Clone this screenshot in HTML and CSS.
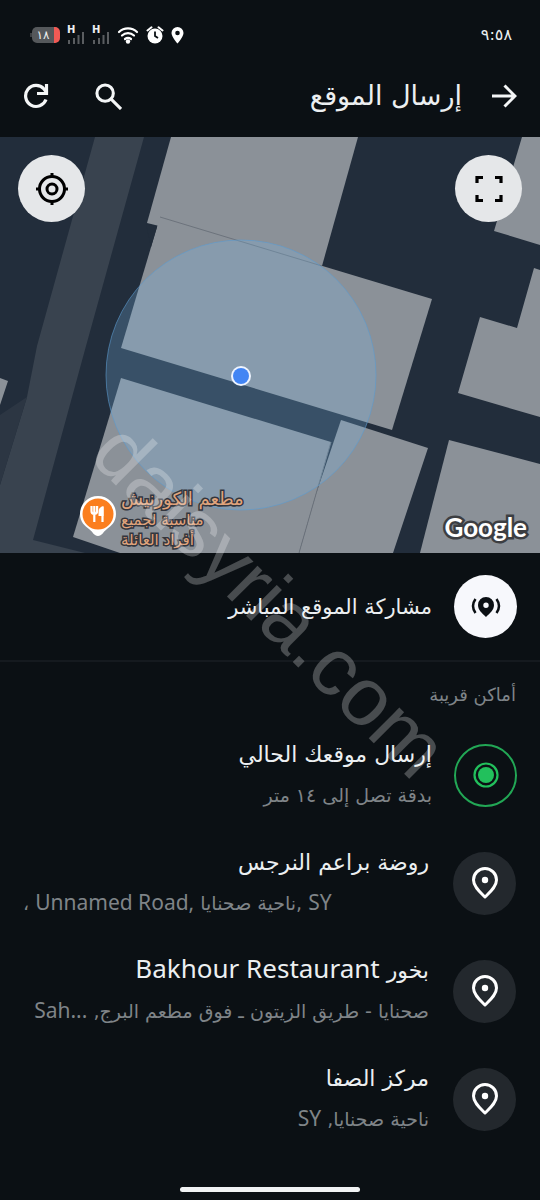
FILE: index.html
```html
<!DOCTYPE html>
<html lang="ar" dir="rtl">
  <head>
    <meta charset="UTF-8" />
    <meta name="viewport" content="width=device-width, initial-scale=1.0" />
    <title>إرسال الموقع</title>
    <link rel="stylesheet" href="styles.css">
  </head>
  <body>
    <div class="screen">
      <div class="status-bar">
        <span class="clock">٩:٥٨</span>
        <div class="status-icons">
          <svg width="13" height="18" viewBox="0 0 13 18">
            <path fill="#fff" fill-rule="evenodd" d="M6.500 1A6 6 0 0 0 .500 7c0 4 6 10.500 6 10.500s6-6.500 6-10.500a6 6 0 0 0-6-6zm0 3.700a2.300 2.300 0 1 1 0 4.600 2.300 2.300 0 0 1 0-4.600z" />
          </svg>
          <svg width="18" height="18" viewBox="0 0 18 18">
            <circle cx="9" cy="10" r="7.500" fill="#fff" />
            <path d="M1.500 4.500l4-3.200M16.500 4.500l-4-3.200" stroke="#fff" stroke-width="2" stroke-linecap="round" />
            <path d="M9 5.500V10l3 2" fill="none" stroke="#0b1014" stroke-width="1.800" />
          </svg>
          <svg width="22" height="18" viewBox="0 0 22 18">
            <g fill="none" stroke="#fff" stroke-width="2.200" stroke-linecap="round">
              <path d="M2 6a13 13 0 0 1 18 0" />
              <path d="M5 9.500a9 9 0 0 1 12 0" />
              <path d="M8 13a5 5 0 0 1 6 0" />
            </g>
            <circle cx="11" cy="15.500" r="2.200" fill="#fff" />
          </svg>
          <div class="signal">
            <span>H</span>
            <svg width="18" height="12" viewBox="0 0 18 12">
              <path d="M2 8v4M7 6v6M11.500 3v9M16 0v12" stroke="#5a5d60" stroke-width="2" />
            </svg>
          </div>
          <div class="signal">
            <span>H</span>
            <svg width="18" height="12" viewBox="0 0 18 12">
              <path d="M2 8v4M7 6v6M11.500 3v9M16 0v12" stroke="#5a5d60" stroke-width="2" />
            </svg>
          </div>
          <div class="battery">١٨</div>
        </div>
      </div>

      <header class="top-bar">
        <button class="icon-btn" aria-label="رجوع">
          <svg width="26" height="26" viewBox="0 0 26 26" fill="none" stroke="#f4f6f7" stroke-width="3">
            <path d="M1 13h23M13.500 2.500L24 13 13.500 23.500" />
          </svg>
        </button>
        <h1>إرسال الموقع</h1>
        <button class="icon-btn" aria-label="بحث">
          <svg width="27" height="27" viewBox="0 0 28 28" fill="none" stroke="#f4f6f7" stroke-width="3.200">
            <circle cx="10.500" cy="10.500" r="8.500" />
            <path d="M16.500 16.500L27 27" />
          </svg>
        </button>
        <button class="icon-btn" aria-label="تحديث">
          <svg width="26" height="26" viewBox="0 0 26 26" fill="none" stroke="#f4f6f7" stroke-width="3.200">
            <path d="M23 16.500A10.500 10.500 0 1 1 21 6l3 4" />
            <path d="M23.500 1v9.500H14" />
          </svg>
        </button>
      </header>

      <section class="map">
        <svg class="map-canvas" viewBox="0 137 540 416" preserveAspectRatio="xMidYMid slice">
          <rect y="137" width="540" height="416" fill="#222d3b" />
          <path fill="#39434f" d="M95 137h49L86 346 33 540l52 13H0v-68l27-88 10-51z" />
          <path fill="#2c3643" d="M27 397L0 485v-70z" />
          <g fill="#8b9198">
            <path d="M171 137h187l-36 129-175-43z" />
            <path d="M160 217l272 82-40 131-271-82z" />
            <path d="M121 378l210 64-32 111H120l-47-16z" />
            <path d="M341 420l87 28-35 105h-94l17-59z" />
            <path d="M522 137h18v108l-46-14z" />
            <path d="M534 268l6 2v147l-82-24 22-76 37 11z" />
            <path d="M449 440l91 24v89H420z" />
            <path d="M0 378l8 3-8 24z" />
          </g>
          <path d="M160 217l162 49" fill="none" stroke="#6c737c" />
          <path d="M146 224l11 3-6 20z" fill="#222d3b" />
          <path d="M331 442l-32 111" stroke="#6c737c" />
          <circle cx="241" cy="375" r="135" fill="#7cbcec" fill-opacity=".25" stroke="#5b9bd0" stroke-opacity=".6" />
          <circle cx="241" cy="376" r="10" fill="#eef4ff" />
          <circle cx="241" cy="376" r="8" fill="#4285f4" />
          <path fill="#fff" d="M98 496a18 18 0 0 0-18 18c0 8 5 12 9 15 4 3 5 7 9 7s5-4 9-7c4-3 9-7 9-15a18 18 0 0 0-18-18z" />
          <circle cx="98" cy="514" r="15.500" fill="#fb7e1e" />
          <path d="M91.500 506v5q0 3 2.800 3t2.800-3v-5M94.300 506v16M102.500 522v-15" fill="none" stroke="#fff" stroke-width="2.200" />
          <path fill="#fff" d="M103.500 506q-5 1-5 6v4h5z" />
        </svg>
        <button class="map-btn expand" aria-label="ملء الشاشة">
          <svg width="28" height="28" viewBox="0 0 28 28" fill="none" stroke="#000" stroke-width="3.200">
            <path d="M2 8V2.500h6M20 2.500h6V8M26 20v5.500h-6M8 25.500H2V20" />
          </svg>
        </button>
        <button class="map-btn locate" aria-label="موقعي">
          <svg width="34" height="34" viewBox="0 0 34 34" fill="none" stroke="#000" stroke-width="3">
            <circle cx="17" cy="17" r="12.500" />
            <circle cx="17" cy="17" r="5" />
            <path d="M17 1v4M17 29v4M1 17h4M29 17h4" />
          </svg>
        </button>
        <p class="poi"><span>مطعم الكورنيش</span><br>مناسبة لجميع<br>أفراد العائلة</p>
        <span class="google">Google</span>
      </section>

      <button class="row live">
        <span class="badge white">
          <svg width="30" height="24" viewBox="0 0 30 24">
            <path fill="#0b1014" fill-rule="evenodd" d="M15 2a8 8 0 0 0-8 8c0 5 4 8 8 12 4-4 8-7 8-12a8 8 0 0 0-8-8zm0 5.500a2.700 2.700 0 1 1 0 5.400 2.700 2.700 0 0 1 0-5.400z" />
            <path d="M4.500 4q-5 7 0 14M25.500 4q5 7 0 14" fill="none" stroke="#0b1014" stroke-width="2.500" />
          </svg>
        </span>
        <span class="text"><span class="name">مشاركة الموقع المباشر</span></span>
      </button>

      <h2>أماكن قريبة</h2>

      <button class="row">
        <span class="badge green">
          <svg width="26" height="26" viewBox="0 0 26 26">
            <circle cx="13" cy="13" r="11.500" fill="none" stroke="#22c05c" stroke-width="2.200" />
            <circle cx="13" cy="13" r="8" fill="#22c05c" />
          </svg>
        </span>
        <span class="text">
          <span class="name">إرسال موقعك الحالي</span>
          <span class="detail">بدقة تصل إلى ١٤ متر</span>
        </span>
      </button>
      <button class="row place">
        <span class="badge">
          <svg width="28" height="34" viewBox="0 0 28 34">
            <path fill="none" stroke="#fff" stroke-width="3" stroke-linejoin="round" d="M14 2.500A11.500 11.500 0 0 0 2.500 14c0 7 7 12.500 11.500 17 4.500-4.500 11.500-10 11.500-17A11.500 11.500 0 0 0 14 2.500z" />
            <circle cx="14" cy="14" r="3.200" fill="#fff" />
          </svg>
        </span>
        <span class="text">
          <span class="name">روضة براعم النرجس</span>
          <span class="detail" dir="ltr">، <span class="latin">Unnamed Road,</span> ناحية صحنايا, <span class="latin">SY</span></span>
        </span>
      </button>
      <button class="row place">
        <span class="badge">
          <svg width="28" height="34" viewBox="0 0 28 34">
            <path fill="none" stroke="#fff" stroke-width="3" stroke-linejoin="round" d="M14 2.500A11.500 11.500 0 0 0 2.500 14c0 7 7 12.500 11.500 17 4.500-4.500 11.500-10 11.500-17A11.500 11.500 0 0 0 14 2.500z" />
            <circle cx="14" cy="14" r="3.200" fill="#fff" />
          </svg>
        </span>
        <span class="text">
          <span class="name">بخور <span class="latin">Bakhour Restaurant</span></span>
          <span class="detail">صحنايا - طريق الزيتون ـ فوق مطعم البرج, <bdi class="latin" dir="ltr">Sah...</bdi></span>
        </span>
      </button>
      <button class="row place">
        <span class="badge">
          <svg width="28" height="34" viewBox="0 0 28 34">
            <path fill="none" stroke="#fff" stroke-width="3" stroke-linejoin="round" d="M14 2.500A11.500 11.500 0 0 0 2.500 14c0 7 7 12.500 11.500 17 4.500-4.500 11.500-10 11.500-17A11.500 11.500 0 0 0 14 2.500z" />
            <circle cx="14" cy="14" r="3.200" fill="#fff" />
          </svg>
        </span>
        <span class="text">
          <span class="name">مركز الصفا</span>
          <span class="detail">ناحية صحنايا, <span class="latin">SY</span></span>
        </span>
      </button>

      <div class="home-bar"></div>
      <div class="watermark" dir="ltr"><span>daisyria.com</span></div>
    </div>
  </body>
</html>
```
FILE: styles.css
```css
* {
  box-sizing: border-box;
}
body {
  margin: 0;
  background-color: #0b1014;
  color: #eceff1;
  font-family: 'DejaVu Sans', sans-serif;
}
button {
  border: none;
  padding: 0;
  background: none;
  color: inherit;
  font-family: inherit;
  cursor: pointer;
}
svg {
  display: block;
}
.screen {
  position: relative;
  display: flex;
  flex-direction: column;
  min-height: 100vh;
  overflow: hidden;
}
.status-bar {
  display: flex;
  justify-content: space-between;
  align-items: center;
  height: 69px;
  padding: 0 28px 0 32px;
}
.clock {
  font-size: 16px;
}
.status-icons {
  display: flex;
  align-items: center;
  gap: 7px;
}
.signal {
  position: relative;
  width: 18px;
  height: 18px;
  padding-top: 6px;
}
.signal span {
  position: absolute;
  top: -1px;
  left: 0;
  font-size: 10px;
  line-height: 10px;
  font-weight: bold;
}
.battery {
  position: relative;
  width: 28px;
  height: 16px;
  border-radius: 5px;
  border-right: 6px solid #f05a55;
  background-color: #55585b;
  font-size: 12px;
  line-height: 16px;
  text-align: center;
}
.battery::before {
  content: '';
  position: absolute;
  top: 6px;
  left: -2px;
  width: 2px;
  height: 4px;
  background-color: #3c3f42;
}
.top-bar {
  display: flex;
  align-items: center;
  height: 68px;
  padding: 0 22px 14px;
}
.icon-btn {
  display: flex;
  justify-content: center;
  width: 28px;
}
.top-bar h1 {
  flex: 1;
  margin: 0 28px;
  font-size: 27px;
  line-height: 40px;
  font-weight: normal;
}
.top-bar .icon-btn:last-child {
  margin-right: 44px;
}
.map {
  position: relative;
  height: 416px;
}
.map-canvas {
  width: 100%;
  height: 100%;
}
.map-btn {
  position: absolute;
  top: 18px;
  display: flex;
  justify-content: center;
  align-items: center;
  width: 67px;
  height: 67px;
  border-radius: 50%;
  background-color: #e5e7e9;
}
.expand {
  right: 18px;
}
.locate {
  left: 18px;
}
.poi {
  position: absolute;
  top: 352px;
  left: 121px;
  margin: 0;
  color: #e0a47c;
  font-size: 15px;
  line-height: 20px;
  text-align: left;
  -webkit-text-stroke: 3px #33363e;
  paint-order: stroke fill;
}
.poi span {
  font-size: 18px;
}
.google {
  position: absolute;
  right: 13px;
  bottom: 8px;
  color: #fff;
  font-family: Lato, sans-serif;
  font-size: 26px;
  line-height: 36px;
  font-weight: bold;
  -webkit-text-stroke: 5px #3c3e42;
  paint-order: stroke fill;
}
.row {
  display: flex;
  align-items: center;
  gap: 22px;
  width: 100%;
  height: 108px;
  padding: 0 23px;
  text-align: right;
}
.place {
  padding-right: 24px;
  gap: 24px;
}
.badge {
  display: flex;
  flex: none;
  justify-content: center;
  align-items: center;
  width: 63px;
  height: 63px;
  border-radius: 50%;
  background-color: #23282d;
}
.badge.white {
  background-color: #f7f8fc;
}
.badge.green {
  border: 2px solid #22a755;
  background: none;
}
.text {
  flex: 1;
  min-width: 0;
}
.name,
.detail {
  display: block;
  white-space: nowrap;
  line-height: 40px;
}
.name {
  font-size: 22px;
}
.detail {
  color: #7f8488;
  font-size: 19px;
}
.detail[dir='ltr'] {
  text-align: left;
}
.latin {
  font-family: 'Noto Sans', sans-serif;
  line-height: 20px;
}
.name .latin {
  font-size: 26px;
}
.detail .latin {
  font-size: 21px;
}
.live {
  height: 109px;
  border-bottom: 2px solid #151a1f;
}
.live .name {
  font-size: 21px;
}
h2 {
  margin: 0;
  padding: 13px 24px 6px;
  color: #7f8488;
  font-size: 18px;
  line-height: 40px;
  font-weight: normal;
}
.home-bar {
  width: 180px;
  height: 5px;
  margin: auto auto 8px;
  border-radius: 3px;
  background-color: #f1f3f4;
}
.watermark {
  position: absolute;
  inset: 0;
  display: flex;
  justify-content: center;
  align-items: center;
  color: rgba(255, 255, 255, 0.25);
  font-family: 'Liberation Sans', Arial, sans-serif;
  font-size: 82px;
  line-height: 80px;
  pointer-events: none;
}
.watermark span {
  transform: rotate(45deg);
}
```
